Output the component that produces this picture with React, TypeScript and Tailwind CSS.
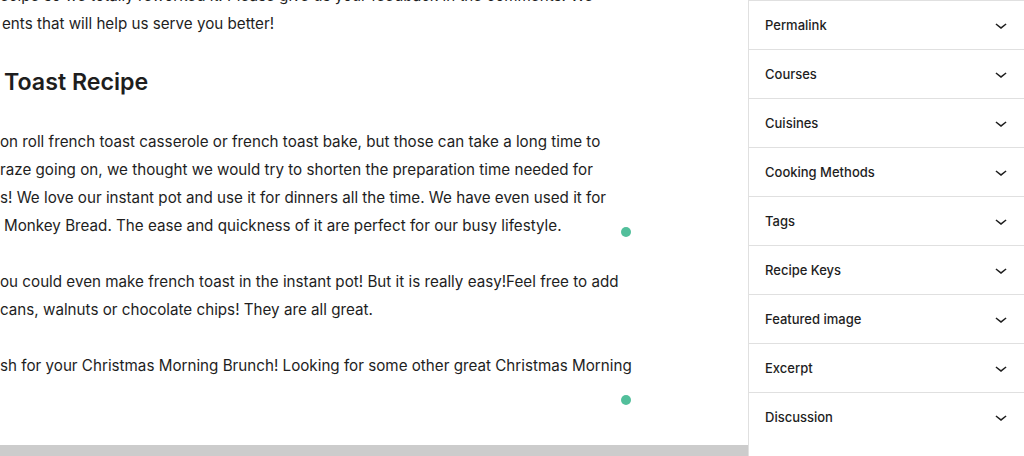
import React from "react";

const panels = [
  "Permalink",
  "Courses",
  "Cuisines",
  "Cooking Methods",
  "Tags",
  "Recipe Keys",
  "Featured image",
  "Excerpt",
  "Discussion",
];

function Chevron() {
  return (
    <svg width="24" height="24" viewBox="0 0 24 24" aria-hidden="true">
      <path d="M17.5 11.6L12 16l-5.5-4.4.9-1.2L12 14l4.6-3.6 1 1.2z" fill="#1e1e1e" />
    </svg>
  );
}

function Line({ children, pl = "" }: { children: React.ReactNode; pl?: string }) {
  return <div className={`whitespace-nowrap h-[28px] leading-[28px] ${pl}`}>{children}</div>;
}

export default function App() {
  return (
    <div
      className="flex h-[456px] w-[1024px] overflow-hidden bg-white text-[#1e1e1e]"
      style={{ fontFamily: "Inter, 'Noto Sans', sans-serif" }}
    >
      <div className="flex flex-1 flex-col min-w-0">
        <div className="relative flex-1 overflow-hidden">
          <div className="mt-[-18px] text-[15.2px]">
            <div>
              <Line>ecipe so we totally reworked it. Please give us your feedback in the comments! We</Line>
              <Line pl="pl-[2px]">ents that will help us serve you better!</Line>
            </div>
            <h2 className="mt-[28px] h-[32px] leading-[32px] pl-[4px] text-[23.2px] font-semibold whitespace-nowrap">
              Toast Recipe
            </h2>
            <div className="mt-[30px]">
              <Line>on roll french toast casserole or french toast bake, but those can take a long time to</Line>
              <Line>raze going on, we thought we would try to shorten the preparation time needed for</Line>
              <Line>s! We love our instant pot and use it for dinners all the time. We have even used it for</Line>
              <Line pl="pl-[4px]">Monkey Bread. The ease and quickness of it are perfect for our busy lifestyle.</Line>
            </div>
            <div className="mt-[28px]">
              <Line>ou could even make french toast in the instant pot! But it is really easy!Feel free to add</Line>
              <Line>cans, walnuts or chocolate chips! They are all great.</Line>
            </div>
            <div className="mt-[28px]">
              <Line>sh for your Christmas Morning Brunch! Looking for some other great Christmas Morning</Line>
              <Line> </Line>
            </div>
          </div>
          <span className="absolute left-[621px] top-[227px] h-[10px] w-[10px] rounded-full bg-[#52bf9b]" />
          <span className="absolute left-[621px] top-[395px] h-[10px] w-[10px] rounded-full bg-[#52bf9b]" />
        </div>
        <div className="h-[11px] bg-[#cccccc]" />
      </div>
      <aside className="w-[276px] shrink-0 border-l border-[#e0e0e0] bg-white">
        {panels.map((p) => (
          <div
            key={p}
            className="flex h-[49px] items-center justify-between border-t border-[#e0e0e0] pl-4 pr-[11px]"
          >
            <span className="pt-[2px] text-[13px] font-medium text-[#1e1e1e]">{p}</span>
            <Chevron />
          </div>
        ))}
      </aside>
    </div>
  );
}
